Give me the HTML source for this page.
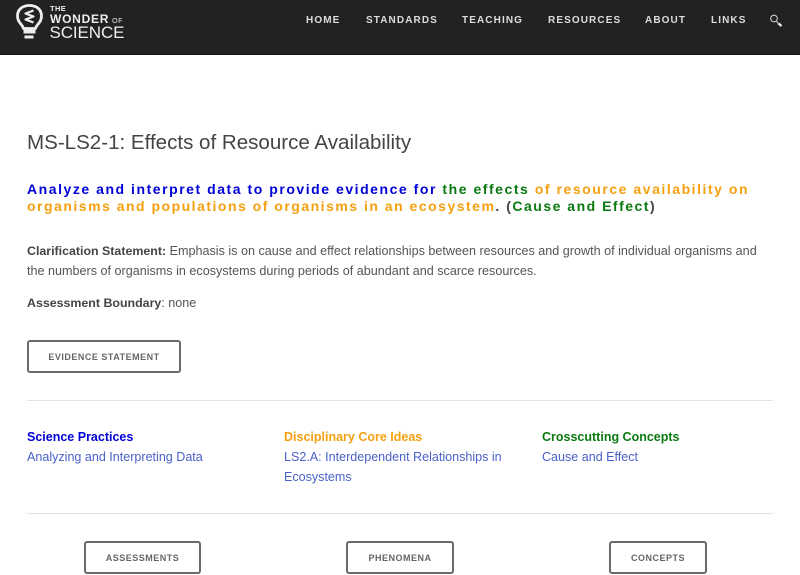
<!DOCTYPE html>
<html>
<head>
<meta charset="utf-8">
<style>
html,body{margin:0;padding:0;background:#fff;width:800px;height:575px;overflow:hidden;font-family:"Liberation Sans",Arial,sans-serif}
.a{position:absolute;white-space:nowrap}
#bar{position:absolute;left:0;top:0;width:800px;height:54px;background:#222;border-bottom:1px solid #111}
.nav{position:absolute;top:15px;font-size:10px;line-height:12px;font-weight:bold;letter-spacing:1.1px;color:#ddd;white-space:nowrap}
.body{font-size:12.6px;line-height:20px;color:#555}
.body b{color:#444;font-size:12.4px}
.hl{font-size:14px;line-height:17px;font-weight:bold;letter-spacing:1.54px;color:#0000d8}
.hl2{letter-spacing:1.5px}
.o{color:#f5a010}.g{color:#0a7a10}.d{color:#444}
.btn{position:absolute;box-sizing:border-box;border:2px solid #6a6a6a;border-radius:3px;background:#fff;color:#666;font-size:9px;font-weight:bold;letter-spacing:.5px;text-align:center;height:33px;line-height:30px;white-space:nowrap}
.hr{position:absolute;left:27px;width:746px;height:1px;background:#e4e4e4}
.h{font-size:12.5px;line-height:20px;font-weight:bold}
.l{font-size:12.55px;line-height:20px;color:#4a62c8}
</style>
</head>
<body>
<div id="bar"></div>
<svg class="a" style="left:14px;top:2px" width="32" height="40" viewBox="0 0 32 40">
<path d="M9.500 26.500C8.500 22.500 3.500 20.500 3.500 14C3.500 7 9 3.500 15.500 3.500S27.500 7 27.500 14C27.500 20.500 22.500 22.500 21.500 26.500Z" fill="none" stroke="#eee" stroke-width="2.800" stroke-linejoin="round"/>
<path d="M19.500 8.500L11.500 11.500L19.500 14.500L11.500 17.500L19.500 20.500" fill="none" stroke="#eee" stroke-width="2.200" stroke-linejoin="round"/>
<path d="M9.500 27H21.500V31.500H9.500Z" fill="#eee"/>
<path d="M10.500 33.500H19.500V36.500H10.500Z" fill="#eee"/>
</svg>
<div class="a" style="left:50px;top:3.500px;font-size:7.500px;line-height:9px;font-weight:bold;color:#eee;letter-spacing:.4px">THE</div>
<div class="a" style="left:50px;top:11.500px;font-size:12px;line-height:14px;font-weight:bold;color:#eee;letter-spacing:.75px">WONDER<span style="font-size:7px;font-weight:normal;letter-spacing:.5px;margin-left:3px">OF</span></div>
<div class="a" style="left:49.500px;top:23.500px;font-size:17px;line-height:18px;color:#eee;letter-spacing:-.1px">SCIENCE</div>
<div class="nav" style="left:306px">HOME</div>
<div class="nav" style="left:366px">STANDARDS</div>
<div class="nav" style="left:462px">TEACHING</div>
<div class="nav" style="left:548px">RESOURCES</div>
<div class="nav" style="left:645px">ABOUT</div>
<div class="nav" style="left:711px">LINKS</div>
<svg class="a" style="left:769px;top:14px" width="14" height="14" viewBox="0 0 14 14">
<circle cx="5" cy="4.500" r="3.300" fill="none" stroke="#ccc" stroke-width="1.100"/>
<path d="M7.500 7.500L9.500 9.500" stroke="#ccc" stroke-width="1.200"/>
<path d="M9.500 9.500L12.500 12" stroke="#eee" stroke-width="2.400"/>
</svg>
<div class="a" style="left:27px;top:130px;font-size:20.55px;line-height:25px;color:#444">MS-LS2-1: Effects of Resource Availability</div>
<div class="a hl" style="left:27px;top:181px">Analyze and interpret data to provide evidence for <span class="g">the effects</span> <span class="o">of resource availability on</span></div>
<div class="a hl hl2" style="left:27px;top:198px"><span class="o">organisms and populations of organisms in an ecosystem</span><span class="d">.</span> <span class="d">(</span><span class="g">Cause and Effect</span><span class="d">)</span></div>
<div class="a body" style="left:27px;top:241px"><b>Clarification Statement:</b> Emphasis is on cause and effect relationships between resources and growth of individual organisms and</div>
<div class="a body" style="left:27px;top:261px">the numbers of organisms in ecosystems during periods of abundant and scarce resources.</div>
<div class="a body" style="left:27px;top:293px"><b>Assessment Boundary</b>: none</div>
<div class="btn" style="left:27px;top:340px;width:154px">EVIDENCE STATEMENT</div>
<div class="hr" style="top:400px"></div>
<div class="a h" style="left:27px;top:427px;color:#0000d8">Science Practices</div>
<div class="a l" style="left:27px;top:447px">Analyzing and Interpreting Data</div>
<div class="a h" style="left:284px;top:427px;color:#f5a010">Disciplinary Core Ideas</div>
<div class="a l" style="left:284px;top:447px">LS2.A: Interdependent Relationships in</div>
<div class="a l" style="left:284px;top:467px">Ecosystems</div>
<div class="a h" style="left:542px;top:427px;color:#0a7a10">Crosscutting Concepts</div>
<div class="a l" style="left:542px;top:447px">Cause and Effect</div>
<div class="hr" style="top:513px"></div>
<div class="btn" style="left:84px;top:541px;width:117px">ASSESSMENTS</div>
<div class="btn" style="left:346px;top:541px;width:108px">PHENOMENA</div>
<div class="btn" style="left:609px;top:541px;width:98px">CONCEPTS</div>
</body>
</html>
